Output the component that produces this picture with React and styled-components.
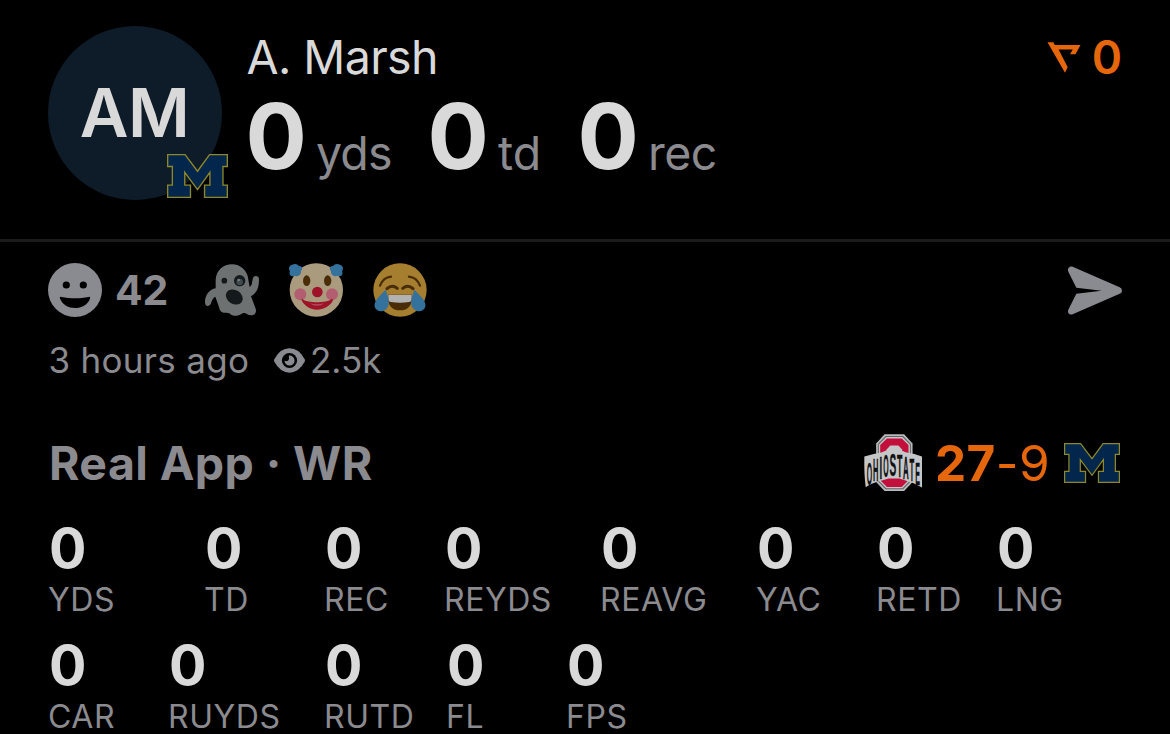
import React from "react";
import styled, { createGlobalStyle } from "styled-components";

const GlobalStyle = createGlobalStyle`
  *, *::before, *::after { box-sizing: border-box; }
  html, body { margin: 0; background: #000; overflow: hidden; }
`;

const Page = styled.main`
  width: 1170px;
  height: 734px;
  overflow: hidden;
  background: #000;
  color: #d9d9d9;
  font-family: Inter, "Liberation Sans", sans-serif;
  white-space: nowrap;
  svg { display: block; flex: none; overflow: visible; }
`;

const Header = styled.header`
  display: flex;
  align-items: flex-start;
  height: 242px;
  padding: 26px 48px 0;
  border-bottom: 3px solid #1b1b1b;
`;

const Avatar = styled.div`
  position: relative;
  display: flex;
  align-items: center;
  justify-content: center;
  width: 174px;
  height: 174px;
  padding: 0 1px 1px 0;
  border-radius: 50%;
  background: #0e1c29;
  font-size: 67px;
  font-weight: 600;
  letter-spacing: -0.5px;
`;

const TeamBadge = styled.div`
  position: absolute;
  left: 119px;
  top: 128px;
`;

const Player = styled.div`
  flex: 1;
  padding-left: 26px;
`;

const Name = styled.h1`
  margin: 0 0 0 -1.5px;
  font-size: 46.5px;
  font-weight: 400;
  line-height: 62px;
  letter-spacing: -0.6px;
`;

const Headline = styled.div`
  display: flex;
  line-height: 97px;
`;

const HeadlineStat = styled.div`
  display: flex;
  align-items: baseline;
  width: ${(p) => p.$width}px;
`;

const HeadlineValue = styled.span`
  width: 68px;
  margin-left: -2.5px;
  margin-right: 2.5px;
  font-size: 91px;
  font-weight: 700;
`;

const HeadlineUnit = styled.span`
  color: #8a8a8f;
  font-size: 46.5px;
  letter-spacing: ${(p) => p.$spacing || 0}px;
  transform: translateY(1px);
`;

const Rating = styled.div`
  display: flex;
  align-items: center;
  gap: 11px;
  color: #e5660b;
  font-size: 46px;
  font-weight: 600;
  line-height: 62px;
`;

const Reactions = styled.section`
  display: flex;
  align-items: center;
  height: 54px;
  margin-top: 21px;
  padding: 0 48px;
`;

const ReactionCount = styled.span`
  width: 90px;
  margin-left: 13px;
  color: #8a8a8f;
  font-size: 41px;
  font-weight: 700;
  letter-spacing: -0.3px;
`;

const EmojiList = styled.div`
  display: flex;
  flex: 1;
  gap: 30px;
`;

const Meta = styled.section`
  display: flex;
  align-items: center;
  height: 44px;
  margin-top: 21px;
  padding: 0 48px;
  color: #8a8a8f;
  font-size: 35px;
`;

const Age = styled.span`
  width: 226px;
  padding-left: 0.5px;
  letter-spacing: 0.3px;
`;

const Views = styled.span`
  margin-left: 5px;
`;

const GameLine = styled.section`
  display: flex;
  align-items: center;
  height: 58px;
  margin-top: 52px;
  padding: 0 50px 0 48px;
`;

const Role = styled.h2`
  flex: 1;
  margin: 0;
  padding-left: 1px;
  color: #8a8a8f;
  font-size: 46.5px;
  font-weight: 700;
  letter-spacing: 0.4px;
`;

const Score = styled.div`
  width: 142px;
  padding-left: 13px;
  color: #e5660b;
  font-size: 49.5px;
  font-weight: 400;
  letter-spacing: 0.4px;
  b { font-weight: 700; }
`;

const StatRow = styled.div`
  display: flex;
  height: 117px;
  padding-left: 48px;
  &:first-child { margin-top: 26px; }
`;

const StatCell = styled.div`
  flex: none;
  width: ${(p) => p.$width}px;
`;

const StatValue = styled.div`
  padding-left: 1px;
  font-size: 55.5px;
  font-weight: 700;
  line-height: 59px;
`;

const StatLabel = styled.div`
  color: #8a8a8f;
  font-size: 32px;
  line-height: 45px;
  letter-spacing: 0.55px;
`;

const BlockM = ({ width, height }) => (
  <svg width={width} height={height} viewBox="-1 -1 182 130" preserveAspectRatio="none">
    <path
      d="M1 1H53L90 50L126 1H179V36H166V91H179V127H111V91H127V53L90 104L52 53V91H69V127H1V91H15V36H1Z"
      fill="#02264c"
      stroke="#8d8829"
      strokeWidth="4"
    />
  </svg>
);

const RatingIcon = () => (
  <svg width="34" height="31" viewBox="0 0 100 92" fill="#e5660b">
    <path d="M1 1H18L23 9H99L84 36H68L76 22H34L61 75L53 91Z" />
  </svg>
);

const SmileIcon = () => (
  <svg width="54" height="54" viewBox="0 0 54 54">
    <circle cx="27" cy="27" r="27" fill="#8a8b91" />
    <circle cx="18.3" cy="22" r="3.6" />
    <circle cx="35.3" cy="22" r="3.6" />
    <path d="M12 35.5C11.4 34.3 12 33.5 13.5 33.9C22 35.7 32 35.7 40.5 33.9C42 33.5 42.5 34.5 42 35.7C39.6 42 33.5 45 27 45S14.5 42 12 35.5Z" />
  </svg>
);

const Ghost = () => (
  <svg width="54" height="54" viewBox="0 0 162 162">
    <path
      d="M81 4C106 4 128 22 130 50L134 72C144 66 140 52 145 43C150 36 162 39 162 48C162 75 156 88 138 100L152 137C158 158 136 160 127 154C112 142 108 160 90 158C78 158 77 150 65 149C48 151 44 142 42 132L31 101C19 107 21 121 14 127C6 132 0 127 0 117C0 96 14 79 32 76V50C34 21 56 4 81 4Z"
      fill="#6d7172"
    />
    <circle cx="58" cy="53" r="8.5" fill="#14191b" />
    <circle cx="104" cy="53" r="17" fill="#14191b" />
    <circle cx="104" cy="57" r="10" fill="#40494d" />
    <circle cx="101" cy="51" r="4" fill="#777b7c" />
    <ellipse cx="88" cy="102" rx="27" ry="21" transform="rotate(32 88 102)" fill="#14191b" />
  </svg>
);

const Clown = () => (
  <svg width="54" height="54" viewBox="0 0 162 162">
    <circle cx="82" cy="81" r="80" fill="#aa9b7f" />
    <g fill="#35719d">
      <path d="M8 6C18 0 27 4 29 9C39 7 43 18 36 24C37 35 27 43 18 38C8 44-2 35 3 24C-3 18 0 8 8 6Z" />
      <path d="M154 6C144 0 135 4 133 9C123 7 119 18 126 24C125 35 135 43 144 38C154 44 164 35 159 24C165 18 162 8 154 6Z" />
    </g>
    <ellipse cx="53" cy="53" rx="11" ry="16" fill="#492d09" />
    <ellipse cx="116" cy="53" rx="11" ry="16" fill="#492d09" />
    <circle cx="34" cy="94" r="18" fill="#b25e70" />
    <circle cx="129" cy="94" r="18" fill="#b25e70" />
    <circle cx="85" cy="87" r="16" fill="#9e1328" />
    <path d="M40 108C55 121 112 121 128 108C129 106 133 108 131 114C122 130 104 140 84 140S48 130 39 114C36 108 38 106 40 108Z" fill="#9e1328" />
    <path d="M62 121Q84 127 106 121Q84 136 62 121Z" fill="#b34e5f" />
  </svg>
);

const Joy = () => (
  <svg width="54" height="54" viewBox="0 0 162 162">
    <circle cx="81" cy="81" r="80" fill="#a57e2f" />
    <g fill="none" stroke="#492d09" strokeWidth="7" strokeLinecap="round">
      <path d="M21 68Q31 43 54 41" />
      <path d="M141 68Q131 43 108 41" />
      <path d="M42 77Q57 63 73 76" strokeWidth="9" />
      <path d="M89 76Q105 63 120 77" strokeWidth="9" />
    </g>
    <path d="M45 95H117C120 126 105 142 81 142S42 126 45 95Z" fill="#492d09" />
    <path d="M46 96H116V108Q116 116 108 117Q81 122 54 117Q46 116 46 108Z" fill="#b2b2b2" />
    <path d="M38 80C43 98 55 122 40 138C30 148 14 147 7 136C1 125 7 113 17 102Z" fill="#35719d" />
    <path d="M124 80C119 98 107 122 122 138C132 148 148 147 155 136C161 125 155 113 145 102Z" fill="#35719d" />
  </svg>
);

const SendIcon = () => (
  <svg width="54" height="49" viewBox="84 46 162 147" fill="#8a8b91">
    <path d="M98 48L239 110Q246 113 246 120T239 129L98 191C89 194 81 186 85 177L109 129L185 120L109 111L85 63C81 53 89 45 98 48Z" />
  </svg>
);

const EyeIcon = () => (
  <svg width="31" height="25" viewBox="0 0 92 74">
    <path d="M1 33Q18 1 46 1T91 33Q93 37 91 41Q74 73 46 73T1 41Q-1 37 1 33Z" fill="#8a8b91" />
    <circle cx="46" cy="37" r="22.5" />
    <path d="M46 22A15 15 0 1 1 31 38Q38 41 42 37T44 22Z" fill="#8a8b91" />
  </svg>
);

const buckeyeLetters = [
  ["O", 7, 150, 16],
  ["H", 26, 139, 16],
  ["I", 45, 132, 8],
  ["O", 56, 128, 16],
  ["S", 75, 125, 20],
  ["T", 97, 127, 16],
  ["A", 115, 132, 17],
  ["T", 134, 139, 14],
  ["E", 151, 149, 14],
];

const OhioState = () => (
  <svg width="58" height="57" viewBox="-1 2 172 169">
    <path d="M60 0H118L143 27V141L118 168H60L35 141V27Z" fill="#b7b9ba" />
    <path d="M63 5H115L138 29V139L115 163H63L40 139V29Z" fill="#5f6366" />
    <path d="M65 8H113L135 30V138L113 160H65L43 138V30Z" fill="#c5c6c7" />
    <path d="M67 12H111L131 32V136L111 156H67L47 136V32Z" fill="#c20f3c" />
    <path d="M77 33H101L112 45V60H66V45Z" fill="#c5c6c7" />
    <path d="M0 66Q24 58 52 53L70 46H106L122 53Q150 57 171 66V158Q150 144 122 137L104 131H72L52 137Q24 143 4 157Q-1 118 0 66Z" fill="#c5c6c7" />
    <g fill="#111" stroke="#111" strokeWidth="1" fontFamily="'Liberation Sans', sans-serif" fontWeight="700" fontSize="94">
      {buckeyeLetters.map(([letter, x, y, width], i) => (
        <text key={i} x={x} y={y} textLength={width} lengthAdjust="spacingAndGlyphs">
          {letter}
        </text>
      ))}
    </g>
  </svg>
);

const statRows = [
  [["YDS", 156], ["TD", 120], ["REC", 120], ["REYDS", 156], ["REAVG", 156], ["YAC", 120], ["RETD", 120], ["LNG", 120]],
  [["CAR", 120], ["RUYDS", 156], ["RUTD", 122], ["FL", 120], ["FPS", 120]],
];

export default function App() {
  return (
    <>
      <GlobalStyle />
      <Page>
        <Header>
          <Avatar>
            AM
            <TeamBadge><BlockM width={61} height={44} /></TeamBadge>
          </Avatar>
          <Player>
            <Name>A. Marsh</Name>
            <Headline>
              <HeadlineStat $width={182}><HeadlineValue>0</HeadlineValue><HeadlineUnit $spacing={-0.9}>yds</HeadlineUnit></HeadlineStat>
              <HeadlineStat $width={150}><HeadlineValue>0</HeadlineValue><HeadlineUnit>td</HeadlineUnit></HeadlineStat>
              <HeadlineStat $width={150}><HeadlineValue>0</HeadlineValue><HeadlineUnit $spacing={-0.5}>rec</HeadlineUnit></HeadlineStat>
            </Headline>
          </Player>
          <Rating><RatingIcon />0</Rating>
        </Header>

        <Reactions>
          <SmileIcon />
          <ReactionCount>42</ReactionCount>
          <EmojiList><Ghost /><Clown /><Joy /></EmojiList>
          <SendIcon />
        </Reactions>

        <Meta>
          <Age>3 hours ago</Age>
          <EyeIcon />
          <Views>2.5k</Views>
        </Meta>

        <GameLine>
          <Role>Real App · WR</Role>
          <OhioState />
          <Score><b>27</b>-9</Score>
          <BlockM width={56} height={40} />
        </GameLine>

        <section>
          {statRows.map((row, i) => (
            <StatRow key={i}>
              {row.map(([label, width]) => (
                <StatCell key={label} $width={width}>
                  <StatValue>0</StatValue>
                  <StatLabel>{label}</StatLabel>
                </StatCell>
              ))}
            </StatRow>
          ))}
        </section>
      </Page>
    </>
  );
}
